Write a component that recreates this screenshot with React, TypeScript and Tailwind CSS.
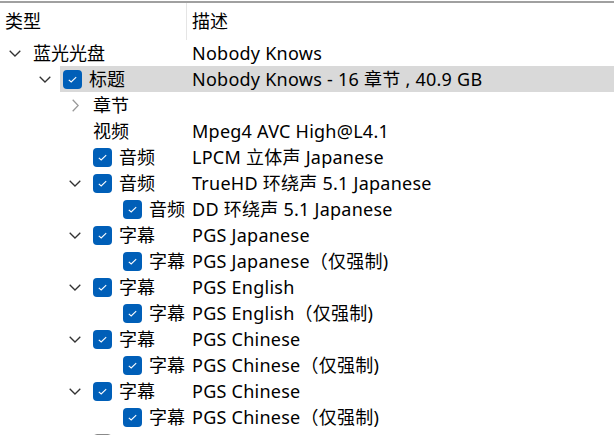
import React from "react";

type Row = {
  level: number;
  expander?: "down" | "right";
  check?: boolean | "off";
  label: string;
  desc: string;
  selected?: boolean;
};

const rows: Row[] = [
  { level: 0, expander: "down", label: "蓝光光盘", desc: "Nobody Knows" },
  { level: 1, expander: "down", check: true, label: "标题", desc: "Nobody Knows - 16 章节 , 40.9 GB", selected: true },
  { level: 2, expander: "right", label: "章节", desc: "" },
  { level: 2, label: "视频", desc: "Mpeg4 AVC High@L4.1" },
  { level: 2, check: true, label: "音频", desc: "LPCM 立体声 Japanese" },
  { level: 2, expander: "down", check: true, label: "音频", desc: "TrueHD 环绕声 5.1 Japanese" },
  { level: 3, check: true, label: "音频", desc: "DD 环绕声 5.1 Japanese" },
  { level: 2, expander: "down", check: true, label: "字幕", desc: "PGS Japanese" },
  { level: 3, check: true, label: "字幕", desc: "PGS Japanese（仅强制)" },
  { level: 2, expander: "down", check: true, label: "字幕", desc: "PGS English" },
  { level: 3, check: true, label: "字幕", desc: "PGS English（仅强制)" },
  { level: 2, expander: "down", check: true, label: "字幕", desc: "PGS Chinese" },
  { level: 3, check: true, label: "字幕", desc: "PGS Chinese（仅强制)" },
  { level: 2, expander: "down", check: true, label: "字幕", desc: "PGS Chinese" },
  { level: 3, check: true, label: "字幕", desc: "PGS Chinese（仅强制)" },
  { level: 2, check: "off", label: "", desc: "" },
];

const indents = ["w-[30px]", "w-[60px]", "w-[90px]", "w-[120px]"];
const labelWidths = ["w-[157px]", "w-[127px]", "w-[97px]", "w-[67px]"];

function Chevron({ dir }: { dir: "down" | "right" }) {
  if (dir === "down") {
    return (
      <svg width="12" height="7" viewBox="0 0 12 7" className="text-[#333]">
        <path d="M0.7 0.7 L6 6 L11.3 0.7" fill="none" stroke="currentColor" strokeWidth="1.3" />
      </svg>
    );
  }
  return (
    <svg width="7" height="13" viewBox="0 0 7 13" className="text-[#999]">
      <path d="M0.7 0.7 L6.2 6.5 L0.7 12.3" fill="none" stroke="currentColor" strokeWidth="1.3" />
    </svg>
  );
}

function Checkbox({ on }: { on: boolean }) {
  if (!on) {
    return <div className="w-[19px] h-[19px] rounded-[4px] border border-[#8a8a8a] bg-white shrink-0" />;
  }
  return (
    <div className="w-[19px] h-[19px] rounded-[4px] bg-[#005fb8] flex items-center justify-center shrink-0">
      <svg width="19" height="19" viewBox="0 0 19 19">
        <path d="M5.8 9.8 L8.2 12 L13.2 7.2" fill="none" stroke="white" strokeWidth="1.1" />
      </svg>
    </div>
  );
}

export default function App() {
  return (
    <div
      className="w-full h-[435px] overflow-hidden bg-white text-black text-[18px] pt-px"
      style={{ fontFamily: '"Noto Sans", "Noto Sans CJK SC", sans-serif' }}
    >
      <div className="border-t-2 border-[#a0a0a0]">
        {/* header */}
        <div className="flex h-[37px] items-center">
          <div className="w-[187px] h-full flex items-center pl-[5px] border-r border-[#e5e5e5]">类型</div>
          <div className="pl-[5px]">描述</div>
        </div>
        {/* tree rows */}
        {rows.map((r, i) => (
          <div key={i} className="flex h-[26px] items-center leading-none">
            <div className={`${indents[r.level]} h-full flex items-center justify-end shrink-0`}>
              <div className="w-[30px] flex items-center justify-center">
                {r.expander && <Chevron dir={r.expander} />}
              </div>
            </div>
            <div className={`flex-1 h-full flex items-center ${r.selected ? "bg-[#d9d9d9]" : ""}`}>
              <div className={`${labelWidths[r.level]} flex items-center gap-[7px] pl-[3px] shrink-0 whitespace-nowrap`}>
                {r.check !== undefined && <Checkbox on={r.check === true} />}
                <span>{r.label}</span>
              </div>
              <div className="pl-[5px] whitespace-nowrap tracking-[0.25px]">{r.desc}</div>
            </div>
          </div>
        ))}
      </div>
    </div>
  );
}
